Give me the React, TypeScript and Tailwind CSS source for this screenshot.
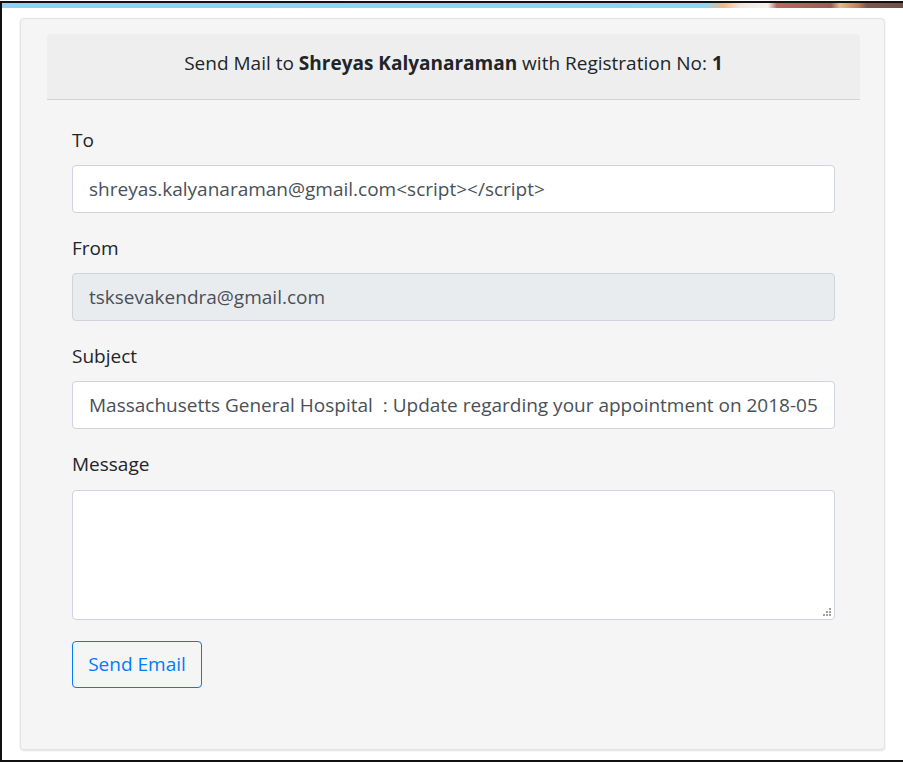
import React from 'react';

const font = { fontFamily: '"Open Sans", "Noto Sans", sans-serif' };

const Field = ({ label, children }: { label: string; children: React.ReactNode }) => (
  <div className="mb-[22px]">
    <label className="block text-[19px] leading-[27px] text-[#212529] mb-[11px]">{label}</label>
    {children}
  </div>
);

const inputCls =
  'block w-full h-[48px] px-[16px] text-[19px] text-[#495057] border border-[#ced4da] rounded-[4px] outline-none';

// dotted resize grip like the old browser textarea corner
const Grip = () => (
  <svg className="absolute right-[4px] bottom-[4px]" width="8" height="8" viewBox="0 0 8 8">
    {[
      [6, 0],
      [6, 3],
      [3, 3],
      [6, 6],
      [3, 6],
      [0, 6],
    ].map(([x, y]) => (
      <rect key={`${x}-${y}`} x={x} y={y} width="2" height="2" fill="#a0a0a0" />
    ))}
  </svg>
);

const App = () => {
  return (
    <div className="w-[903px] h-[763px] bg-white pt-[1px]" style={font}>
      <div className="h-[761px] border-t-2 border-l-2 border-b-2 border-[#111]">
        {/* banner image strip */}
        <div className="h-[5px] bg-[linear-gradient(to_right,#8ad4ef_0%,#8fd6f0_78%,#e9b98a_80%,#f2e6dc_82%,#f4f2f0_85%,#b86a60_86%,#a25a55_92%,#e9b98a_93%,#c77a5c_95%,#7a5a50_96%,#6e5148_100%)]" />

        <div className="mt-[10px] ml-[18px] mr-[18px] h-[732px] bg-[#f5f5f5] border border-[#e3e3e3] rounded-[4px] shadow-[0_1px_2px_rgba(0,0,0,0.12)] pt-[15px] pl-[26px] pr-[24px]">
          <div className="h-[66px] pb-[7px] bg-[#eeeeee] border-b border-[#d4d4d4] rounded-t-[4px] flex items-center justify-center text-[19px] text-[#212529]">
            <span>
              Send Mail to <b>Shreyas Kalyanaraman</b> with Registration No: <b>1</b>
            </span>
          </div>

          <form className="px-[25px] pt-[27px]" onSubmit={(e) => e.preventDefault()}>
            <Field label="To">
              <input
                className={`${inputCls} bg-white`}
                defaultValue="shreyas.kalyanaraman@gmail.com<script></script>"
              />
            </Field>
            <Field label="From">
              <input className={`${inputCls} bg-[#e9ecef]`} defaultValue="tsksevakendra@gmail.com" disabled />
            </Field>
            <Field label="Subject">
              <input
                className={`${inputCls} bg-white`}
                defaultValue="Massachusetts General Hospital  : Update regarding your appointment on 2018-05-14"
              />
            </Field>
            <div className="mb-[21px]">
              <label className="block text-[19px] leading-[27px] text-[#212529] mb-[12px]">Message</label>
              <div className="relative">
                <textarea
                  className="block w-full h-[130px] px-[16px] py-[8px] text-[19px] text-[#495057] bg-white border border-[#ced4da] rounded-[4px] outline-none resize-none"
                  defaultValue=""
                />
                <Grip />
              </div>
            </div>
            <button
              type="submit"
              className="h-[47px] w-[130px] text-[19px] text-[#007bff] border border-[#007bff] rounded-[4px] bg-transparent"
            >
              Send Email
            </button>
          </form>
        </div>
      </div>
    </div>
  );
};

export default App;
